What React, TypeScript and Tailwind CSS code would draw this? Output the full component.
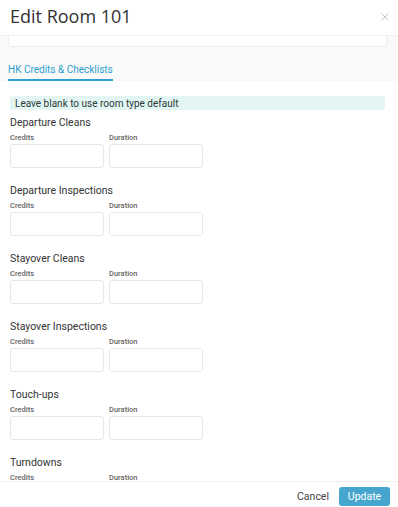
import React from "react";

const sections = [
  "Departure Cleans",
  "Departure Inspections",
  "Stayover Cleans",
  "Stayover Inspections",
  "Touch-ups",
  "Turndowns",
];

function Section({ title }: { title: string }) {
  return (
    <div className="mb-[16px]">
      <div className="text-[10.5px] leading-[14px] text-[#333]">{title}</div>
      <div className="mt-[3px] flex gap-[5px]">
        <div className="w-[94px]">
          <div className="text-[7.5px] leading-[10px] font-medium text-[#666]">Credits</div>
          <div className="mt-[1px] h-[24px] rounded-[3px] border border-[#e6e6e6] bg-white" />
        </div>
        <div className="w-[94px]">
          <div className="text-[7.5px] leading-[10px] font-medium text-[#666]">Duration</div>
          <div className="mt-[1px] h-[24px] rounded-[3px] border border-[#e6e6e6] bg-white" />
        </div>
      </div>
    </div>
  );
}

export default function App() {
  return (
    <div
      className="flex h-[507px] w-[398px] flex-col overflow-hidden bg-white"
      style={{ fontFamily: "Roboto, 'Liberation Sans', sans-serif" }}
    >
      <div className="relative flex h-[36px] shrink-0 items-start border-b border-[#f0f0f0] px-[10px] pt-[4px]">
        <div
          className="text-[18px] leading-[24px] text-[#333]"
          style={{ fontFamily: "'Open Sans', sans-serif" }}
        >
          Edit Room 101
        </div>
        <svg
          className="absolute right-[9px] top-[13px]"
          width="8"
          height="8"
          viewBox="0 0 8 8"
          fill="none"
          stroke="#c4c4c4"
          strokeWidth="1"
        >
          <path d="M0.5 0.5 L7.5 7.5 M7.5 0.5 L0.5 7.5" />
        </svg>
      </div>
      <div className="flex-1 overflow-hidden">
        <div className="bg-[#f9f9f9] pl-[8px] pr-[11px]">
          <div className="h-[11px] rounded-b-[4px] border-x border-b border-[#efefef] bg-white" />
          <div className="flex pt-[16px]">
            <div className="border-b-2 border-[#2ea0cf] pb-[3px] text-[10px] leading-[13px] text-[#2ea0cf]">
              HK Credits &amp; Checklists
            </div>
          </div>
        </div>
        <div className="px-[10px] pt-[15px]">
          <div className="mr-[3px] flex h-[14px] items-center rounded-[2px] bg-[#e3f6f4] px-[5px] text-[10px] text-[#2b3a38]">
            Leave blank to use room type default
          </div>
          <div className="mt-[6px]">
            {sections.map((s) => (
              <Section key={s} title={s} />
            ))}
          </div>
        </div>
      </div>
      <div className="flex h-[26px] shrink-0 items-start justify-end gap-[10px] border-t border-[#f0f0f0] pr-[8px] pt-[5px]">
        <button className="h-[19px] px-0 text-[10.5px] text-[#444]">Cancel</button>
        <button className="h-[19px] w-[51px] rounded-[3px] bg-[#46a6cd] text-[10.5px] text-white">
          Update
        </button>
      </div>
    </div>
  );
}
